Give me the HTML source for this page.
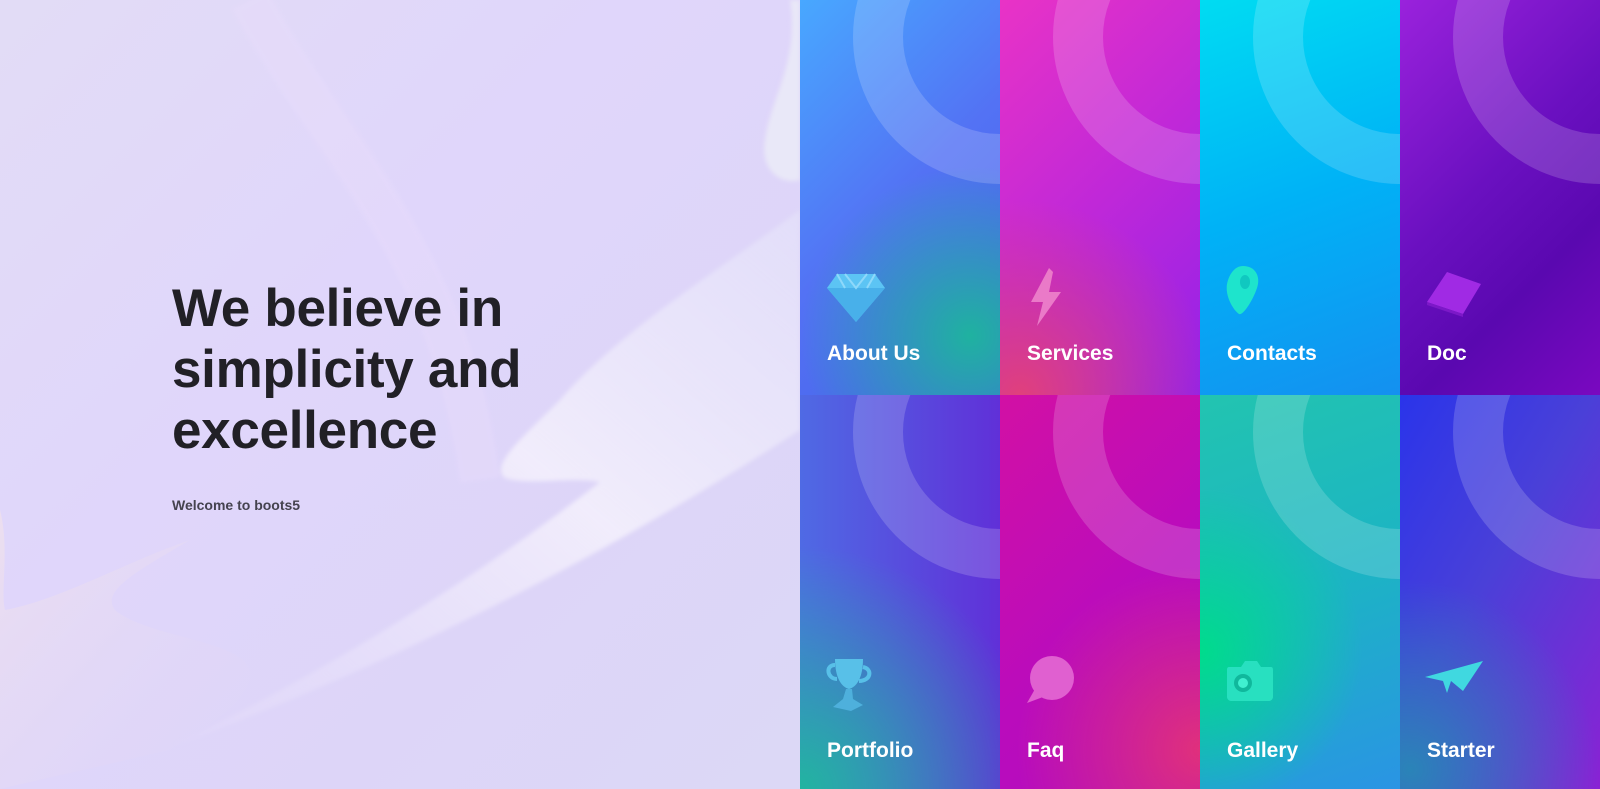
<!DOCTYPE html>
<html><head><meta charset="utf-8">
<style>
*{margin:0;padding:0;box-sizing:border-box}
html,body{width:1600px;height:789px;overflow:hidden;font-family:"Liberation Sans",sans-serif}
.left{position:absolute;left:0;top:0;width:800px;height:789px;background:linear-gradient(135deg,#e2dcf6 0%,#e0d6fb 40%,#ddd5f8 70%,#dcd8f6 100%);overflow:hidden}
.left svg{position:absolute;left:0;top:0}
h1{position:absolute;left:172px;top:278px;font-size:53px;line-height:61px;font-weight:700;color:#212026;letter-spacing:-0.3px}
.wel{position:absolute;left:172px;top:497px;font-size:14px;font-weight:700;color:#45434f}
.tile{position:absolute;width:200px;height:394.5px;overflow:hidden}
.ring{position:absolute;width:294px;height:294px;border-radius:50%;border:50px solid rgba(255,255,255,.17);right:-147px}
.lbl{position:absolute;left:27px;font-size:21px;font-weight:700;color:#fff}
.ic{position:absolute;left:25px}
</style></head><body>
<div class="left">
<svg width="800" height="789" viewBox="0 0 800 789">
<defs>
<linearGradient id="w1" x1="0" y1="1" x2="1" y2="0"><stop offset="0" stop-color="#e6defa" stop-opacity=".3"/><stop offset=".55" stop-color="#f2eefc" stop-opacity=".95"/><stop offset="1" stop-color="#e6e4fa" stop-opacity=".6"/></linearGradient>
<linearGradient id="w2" x1="0" y1="0" x2="1" y2="1"><stop offset="0" stop-color="#f1e2ea"/><stop offset="1" stop-color="#ddd6f8" stop-opacity="0"/></linearGradient>
<filter id="b"><feGaussianBlur stdDeviation="2"/></filter>
</defs>
<path d="M800 0 L800 180 C780 185 760 170 765 140 C770 100 800 60 790 0Z" fill="#e9e8f8" filter="url(#b)"/>
<path d="M800 210 C720 270 620 330 560 400 C520 440 490 465 505 478 C530 486 570 476 600 482 C500 560 350 660 175 745 C380 670 600 560 800 430 Z" fill="url(#w1)" filter="url(#b)"/>
<path d="M0 510 C10 550 0 590 5 610 C60 600 130 560 190 540 C140 570 100 590 115 610 C150 640 260 640 250 680 C240 710 200 730 170 750 L0 789Z" fill="url(#w2)" opacity=".7"/>
<path d="M250 0 C330 150 450 250 480 480" stroke="#ecdffc" stroke-width="40" fill="none" opacity=".3" filter="url(#b)"/>
</svg>
<h1>We believe in<br>simplicity and<br>excellence</h1>
<div class="wel">Welcome to boots5</div>
</div>

<!-- row 1 -->
<div class="tile" style="left:800px;top:0;background:radial-gradient(circle at 85% 85%,#1fb2a0 0,rgba(31,178,160,0) 45%),linear-gradient(135deg,#48a8ff 0%,#5372f4 50%,#4660e8 100%)">
<div class="ring" style="top:-110px"></div>
<svg class="ic" style="top:272px" width="62" height="52" viewBox="0 0 62 52"><path d="M12 2 H50 L60 16 L31 50 L2 16Z" fill="#5cc4f4"/><path d="M2 16 H60 L31 50Z" fill="#48b0ea"/><path d="M20 2 L31 16 L42 2 M12 2 L20 16 M50 2 L42 16" stroke="#8ed8fa" stroke-width="2" fill="none"/></svg>
<div class="lbl" style="top:342px">About Us</div></div>

<div class="tile" style="left:1000px;top:0;background:radial-gradient(circle at 10% 100%,#e0407c 0,rgba(224,64,124,0) 45%),linear-gradient(135deg,#e933c6 0%,#c028d8 50%,#9322e8 100%)">
<div class="ring" style="top:-110px"></div>
<svg class="ic" style="top:268px" width="40" height="58" viewBox="0 0 40 58"><path d="M24 0 L6 34 H18 L12 58 L36 24 H24 L28 4Z" fill="#ea7ac8"/></svg>
<div class="lbl" style="top:342px">Services</div></div>

<div class="tile" style="left:1200px;top:0;background:linear-gradient(160deg,#00dcf2 0%,#00b2f6 50%,#1490f0 100%)">
<div class="ring" style="top:-110px"></div>
<svg class="ic" style="top:266px" width="36" height="50" viewBox="0 0 36 50"><path d="M18 0 C30 0 36 10 32 22 C28 34 18 50 14 48 C8 44 0 30 2 18 C4 8 10 0 18 0Z" fill="#1ee4cc"/><ellipse cx="20" cy="16" rx="5" ry="7" fill="#10c8c0"/></svg>
<div class="lbl" style="top:342px">Contacts</div></div>

<div class="tile" style="left:1400px;top:0;background:linear-gradient(135deg,#9a22dc 0%,#6a10c0 45%,#5a08b0 70%,#7a08c0 100%)">
<div class="ring" style="top:-110px"></div>
<svg class="ic" style="top:270px" width="60" height="48" viewBox="0 0 60 48"><path d="M22 2 L56 14 L38 44 L2 32Z" fill="#a02ae4"/><path d="M2 32 L38 44 L38 47 L2 35Z" fill="#7c18c8"/></svg>
<div class="lbl" style="top:342px">Doc</div></div>

<!-- row 2 -->
<div class="tile" style="left:800px;top:394.5px;background:radial-gradient(circle at 0% 100%,#22b4a0 0,rgba(34,180,160,0) 55%),linear-gradient(90deg,#4f6ae4 0%,#6030d8 100%)">
<div class="ring" style="top:-110px"></div>
<svg class="ic" style="top:262px" width="50" height="54" viewBox="0 0 50 54"><path d="M10 2 H38 C38 20 32 30 24 32 C16 30 10 20 10 2Z" fill="#58c0e8"/><path d="M10 8 C0 8 2 22 12 22 M38 10 C48 12 46 24 34 24" stroke="#58c0e8" stroke-width="4" fill="none"/><path d="M21 32 H27 L28 42 L38 48 L26 54 L8 50 L18 42Z" fill="#4eb0dc"/></svg>
<div class="lbl" style="top:344px">Portfolio</div></div>

<div class="tile" style="left:1000px;top:394.5px;background:radial-gradient(circle at 100% 90%,#e0307c 0,rgba(224,48,124,0) 45%),linear-gradient(135deg,#d210a4 0%,#ba0cbc 55%,#b00cc0 100%)">
<div class="ring" style="top:-110px"></div>
<svg class="ic" style="top:260px" width="50" height="50" viewBox="0 0 50 50"><circle cx="27" cy="23" r="22" fill="#e060d0"/><path d="M10 34 L2 48 L18 42Z" fill="#e060d0"/></svg>
<div class="lbl" style="top:344px">Faq</div></div>

<div class="tile" style="left:1200px;top:394.5px;background:radial-gradient(circle at 0% 65%,#00dc8c 0,rgba(0,220,140,0) 50%),linear-gradient(160deg,#22c4b0 0%,#1cb4c4 50%,#2a94e4 100%)">
<div class="ring" style="top:-110px"></div>
<svg class="ic" style="top:264px" width="50" height="44" viewBox="0 0 50 44"><path d="M4 8 H16 L20 2 H32 L36 8 H46 C48 8 48 10 48 12 V38 C48 40 46 42 44 42 H6 C4 42 2 40 2 38 V12 C2 10 2 8 4 8Z" fill="#28e0c0"/><circle cx="18" cy="24" r="9" fill="#10b89c"/><circle cx="18" cy="24" r="5" fill="#40f0d0"/></svg>
<div class="lbl" style="top:344px">Gallery</div></div>

<div class="tile" style="left:1400px;top:394.5px;background:radial-gradient(circle at 5% 95%,#2a84b8 0,rgba(42,132,184,0) 45%),linear-gradient(120deg,#2a34ea 0%,#4a40d8 45%,#8a22d4 100%)">
<div class="ring" style="top:-110px"></div>
<svg class="ic" style="top:266px" width="60" height="34" viewBox="0 0 60 34"><path d="M0 16 L58 0 L38 30 L26 20 L22 32 L18 20Z" fill="#40d8e0"/></svg>
<div class="lbl" style="top:344px">Starter</div></div>
</body></html>
